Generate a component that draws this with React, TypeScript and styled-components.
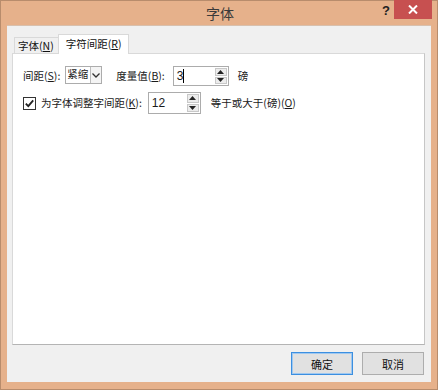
import styled, { createGlobalStyle } from 'styled-components';

const GlobalStyle = createGlobalStyle`
  html, body {
    margin: 0;
    padding: 0;
    background: #e6b18b;
  }
  * {
    box-sizing: border-box;
  }
`;

const FONT = `"Noto Sans CJK SC", "Liberation Sans", sans-serif`;

function Key({ k }: { k: string }) {
  return (
    <>
      (<U>{k}</U>)
    </>
  );
}

function Spin({ value, width, height, caret }: { value: string; width: number; height: number; caret?: boolean }) {
  return (
    <SpinBox $w={width} $h={height}>
      <SpinText>
        {value}
        {caret && <Caret />}
      </SpinText>
      <SpinButtons>
        <SpinBtn>
          <svg width="7" height="4" viewBox="0 0 7 4">
            <path d="M0 4 L3.5 0 L7 4 Z" fill="#222" />
          </svg>
        </SpinBtn>
        <SpinBtn>
          <svg width="7" height="4" viewBox="0 0 7 4">
            <path d="M0 0 L3.5 4 L7 0 Z" fill="#222" />
          </svg>
        </SpinBtn>
      </SpinButtons>
    </SpinBox>
  );
}

export default function App() {
  return (
    <>
      <GlobalStyle />
      <Window>
        <TitleBar>
          <span />
          <Title>字体</Title>
          <Controls>
            <Help>?</Help>
            <Close>
              <svg width="10" height="9" viewBox="0 0 10 9">
                <path d="M1 0.5 L9 8.5 M9 0.5 L1 8.5" stroke="#fff" strokeWidth="2" />
              </svg>
            </Close>
          </Controls>
        </TitleBar>
        <Client>
          <Tabs>
            <Tab>
              字体<Key k="N" />
            </Tab>
            <Tab $active>
              字符间距<Key k="R" />
            </Tab>
          </Tabs>
          <Panel>
            <Row>
              <Label>
                间距<Key k="S" />:
              </Label>
              <Combo>
                <ComboText>紧缩</ComboText>
                <ComboArrow>
                  <svg width="8" height="5" viewBox="0 0 8 5">
                    <path d="M0.5 0.5 L4 4 L7.5 0.5" stroke="#333" strokeWidth="1.3" fill="none" />
                  </svg>
                </ComboArrow>
              </Combo>
              <Label $gap={14}>
                度量值<Key k="B" />:
              </Label>
              <Spacer $w={8} />
              <Spin value="3" width={56} height={20} caret />
              <Label $gap={9}>磅</Label>
            </Row>
            <Row $top={6}>
              <Check>
                <svg width="11" height="11" viewBox="0 0 11 11">
                  <path d="M1.8 5.6 L4.3 8.2 L9.2 2.4" stroke="#222" strokeWidth="1.8" fill="none" />
                </svg>
              </Check>
              <Label $gap={5}>
                为字体调整字间距<Key k="K" />:
              </Label>
              <Spacer $w={6} />
              <Spin value="12" width={53} height={22} />
              <Label $gap={10}>
                等于或大于(磅)<Key k="O" />
              </Label>
            </Row>
          </Panel>
          <Footer>
            <Button $primary>确定</Button>
            <Button>取消</Button>
          </Footer>
        </Client>
      </Window>
    </>
  );
}

const Window = styled.div`
  width: 438px;
  height: 390px;
  background: #e6b18b;
  border: 1px solid #b88c6c;
  display: flex;
  flex-direction: column;
  font-family: ${FONT};
  font-size: 10.5px;
  color: #1a1a1a;
`;

const TitleBar = styled.div`
  height: 24px;
  display: grid;
  grid-template-columns: 1fr auto 1fr;
  align-items: start;
`;

const Title = styled.div`
  font-size: 14px;
  line-height: 24px;
  color: #3a3a3a;
  padding-left: 2px;
`;

const Controls = styled.div`
  justify-self: end;
  display: flex;
  align-items: flex-start;
  margin-right: 5px;
`;

const Help = styled.div`
  font-family: "Liberation Sans", sans-serif;
  font-weight: bold;
  font-size: 13px;
  line-height: 20px;
  color: #222;
  width: 12px;
`;

const Close = styled.div`
  width: 38px;
  height: 19px;
  margin-top: -1px;
  background: #c75050;
  display: flex;
  align-items: center;
  justify-content: center;
`;

const Client = styled.div`
  flex: 1;
  margin: 0 6px 7px 6px;
  background: #f0f0f0;
  border-top: 1px solid #d8c0ad;
  padding: 8px 6px 7px 5px;
  display: flex;
  flex-direction: column;
`;

const Tabs = styled.div`
  display: flex;
  align-items: flex-end;
  padding-left: 2px;
  position: relative;
  z-index: 1;
  margin-bottom: -1px;
`;

const Tab = styled.div<{ $active?: boolean }>`
  height: ${(p) => (p.$active ? 20 : 17)}px;
  padding: 0 ${(p) => (p.$active ? 6 : 4)}px 0 ${(p) => (p.$active ? 7 : 3)}px;
  padding-top: ${(p) => (p.$active ? 1 : 0)}px;
  line-height: 16px;
  background: ${(p) => (p.$active ? '#fff' : '#f0f0f0')};
  border: 1px solid #d9d9d9;
  border-bottom: ${(p) => (p.$active ? 'none' : '1px solid #d9d9d9')};
  margin-left: ${(p) => (p.$active ? -1 : 0)}px;
  color: #111;
`;

const U = styled.span`
  text-decoration: underline;
  text-underline-offset: 1px;
`;

const Panel = styled.div`
  flex: 1;
  background: #fff;
  border: 1px solid #d9d9d9;
  border-right-color: #c6c6c6;
  border-bottom: 1px solid #b4b4b4;
  padding: 12px 10px;
  display: flex;
  flex-direction: column;
`;

const Row = styled.div<{ $top?: number }>`
  display: flex;
  align-items: center;
  margin-top: ${(p) => p.$top ?? 0}px;
`;

const Label = styled.span<{ $gap?: number }>`
  margin-left: ${(p) => p.$gap ?? 0}px;
  white-space: nowrap;
  line-height: 16px;
`;

const Spacer = styled.span<{ $w: number }>`
  width: ${(p) => p.$w}px;
  flex: none;
`;

const Combo = styled.div`
  margin-left: 5px;
  width: 37px;
  height: 18px;
  border: 1px solid #acacac;
  display: flex;
  align-self: flex-start;
  background: #fff;
`;

const ComboText = styled.div`
  flex: 1;
  padding-left: 1px;
  line-height: 14px;
  background: #fff;
`;

const ComboArrow = styled.div`
  width: 11px;
  border-left: 1px solid #bcbcbc;
  background: #f4f4f4;
  display: flex;
  align-items: center;
  justify-content: center;
`;

const SpinBox = styled.div<{ $w: number; $h: number }>`
  width: ${(p) => p.$w}px;
  height: ${(p) => p.$h}px;
  border: 1px solid #acacac;
  background: #fff;
  display: flex;
  flex: none;
`;

const SpinText = styled.div`
  flex: 1;
  display: flex;
  align-items: center;
  padding-left: 3px;
  font-family: "Liberation Sans", sans-serif;
  font-size: 12px;
`;

const Caret = styled.span`
  width: 1px;
  height: 14px;
  background: #000;
`;

const SpinButtons = styled.div`
  width: 13px;
  display: flex;
  flex-direction: column;
  gap: 1px;
  padding: 1px 1px 1px 0;
`;

const SpinBtn = styled.div`
  flex: 1;
  background: #ececec;
  border: 1px solid #c8c8c8;
  display: flex;
  align-items: center;
  justify-content: center;
`;

const Check = styled.div`
  width: 13px;
  height: 13px;
  border: 1px solid #333;
  background: #fff;
  display: flex;
  align-items: center;
  justify-content: center;
  flex: none;
`;

const Footer = styled.div`
  display: flex;
  justify-content: flex-end;
  gap: 9px;
  padding-top: 7px;
  padding-right: 1px;
`;

const Button = styled.button<{ $primary?: boolean }>`
  width: 62px;
  height: 23px;
  font-family: ${FONT};
  font-size: 11px;
  color: #111;
  background: #e1e1e1;
  border: 1px solid ${(p) => (p.$primary ? '#3c8fe0' : '#adadad')};
  box-shadow: ${(p) => (p.$primary ? 'inset 0 0 0 1px #9fc8f0' : 'none')};
  padding: 0;
`;
